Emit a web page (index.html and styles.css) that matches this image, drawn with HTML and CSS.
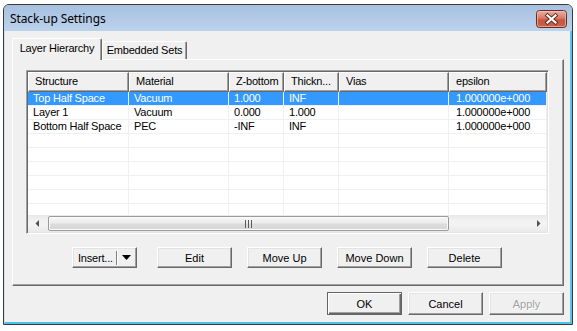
FILE: index.html
```html
<!DOCTYPE html>
<html lang="en">
<head>
  <meta charset="UTF-8"/>
  <title>Stack-up Settings</title>
  <link rel="stylesheet" href="styles.css">
</head>
<body>

<div class="window">
  <div class="titlebar">
    <span class="title">Stack-up Settings</span>
    <span class="close">
      <svg width="31" height="18" viewBox="0 0 31 18">
        <defs>
          <linearGradient id="cg" x1="0" y1="0" x2="0" y2="1">
            <stop offset="0" stop-color="#eab4a6"/>
            <stop offset="0.45" stop-color="#d77a66"/>
            <stop offset="0.55" stop-color="#c9553e"/>
            <stop offset="1" stop-color="#c8624a"/>
          </linearGradient>
        </defs>
        <rect x="0.5" y="0.5" width="30" height="17" rx="3" fill="url(#cg)" stroke="#6b2c22"/>
        <rect x="1.5" y="1.5" width="28" height="15" rx="2" fill="none" stroke="#f4c9bd" stroke-opacity="0.6"/>
        <path d="M11.5 5.5 L19.5 12.5 M19.5 5.5 L11.5 12.5" stroke="#5a2a24" stroke-width="4" stroke-linecap="square"/>
        <path d="M11.5 5.5 L19.5 12.5 M19.5 5.5 L11.5 12.5" stroke="#fff" stroke-width="2.2" stroke-linecap="square"/>
      </svg>
    </span>
  </div>

  <div class="client">
    <div class="tabs">
      <div class="tab active">Layer Hierarchy</div>
      <div class="tab">Embedded Sets</div>
    </div>

    <div class="panel">
      <div class="listview">
        <div class="lv-head">
          <div class="th">Structure</div>
          <div class="th">Material</div>
          <div class="th">Z-bottom</div>
          <div class="th">Thickn...</div>
          <div class="th">Vias</div>
          <div class="th">epsilon</div>
        </div>
        <div class="lv-body">
          <div class="row sel">
            <div class="cell">Top Half Space</div><div class="cell">Vacuum</div><div class="cell">1.000</div><div class="cell">INF</div><div class="cell"></div><div class="cell wide">1.000000e+000</div>
          </div>
          <div class="row">
            <div class="cell">Layer 1</div><div class="cell">Vacuum</div><div class="cell">0.000</div><div class="cell">1.000</div><div class="cell"></div><div class="cell wide">1.000000e+000</div>
          </div>
          <div class="row">
            <div class="cell">Bottom Half Space</div><div class="cell">PEC</div><div class="cell">-INF</div><div class="cell">INF</div><div class="cell"></div><div class="cell wide">1.000000e+000</div>
          </div>
          <div class="row"><div class="cell"></div><div class="cell"></div><div class="cell"></div><div class="cell"></div><div class="cell"></div><div class="cell"></div></div>
          <div class="row"><div class="cell"></div><div class="cell"></div><div class="cell"></div><div class="cell"></div><div class="cell"></div><div class="cell"></div></div>
          <div class="row"><div class="cell"></div><div class="cell"></div><div class="cell"></div><div class="cell"></div><div class="cell"></div><div class="cell"></div></div>
          <div class="row"><div class="cell"></div><div class="cell"></div><div class="cell"></div><div class="cell"></div><div class="cell"></div><div class="cell"></div></div>
          <div class="row"><div class="cell"></div><div class="cell"></div><div class="cell"></div><div class="cell"></div><div class="cell"></div><div class="cell"></div></div>
          <div class="row"><div class="cell"></div><div class="cell"></div><div class="cell"></div><div class="cell"></div><div class="cell"></div><div class="cell"></div></div>
        </div>
        <div class="hscroll">
          <div class="arrow">
            <svg width="4" height="7" viewBox="0 0 4 7"><path d="M4 0 L4 7 L0.5 3.5 Z" fill="#505050"/></svg>
          </div>
          <div class="track">
            <div class="thumb">
              <svg width="7" height="8" viewBox="0 0 7 8">
                <path d="M0.5 0 V8 M3.5 0 V8 M6.5 0 V8" stroke="#5a5a5a" stroke-width="1"/>
              </svg>
            </div>
          </div>
          <div class="arrow">
            <svg width="4" height="7" viewBox="0 0 4 7"><path d="M0 0 L0 7 L3.5 3.5 Z" fill="#505050"/></svg>
          </div>
        </div>
      </div>

      <div class="actions">
        <div class="btn split">
          <span class="label">Insert...</span>
          <span class="divider"></span>
          <svg width="9" height="5" viewBox="0 0 9 5"><path d="M0 0 H9 L4.5 5 Z" fill="#000"/></svg>
        </div>
        <button class="btn edit">Edit</button>
        <button class="btn">Move Up</button>
        <button class="btn">Move Down</button>
        <button class="btn">Delete</button>
      </div>
    </div>

    <div class="dialog-buttons">
      <button class="btn big default">OK</button>
      <button class="btn big">Cancel</button>
      <button class="btn big disabled">Apply</button>
    </div>
  </div>
</div>

</body>
</html>
```

FILE: styles.css
```css
body {
  margin: 0;
  background: #fff;
  font: 11px "Liberation Sans", Arial, sans-serif;
  letter-spacing: -0.2px;
  color: #000;
}
.window {
  box-sizing: border-box;
  width: 570px; height: 321px;
  margin: 4px 0 0 3px;
  border: 1px solid #3a3a3a;
  border-radius: 6px 6px 0 0;
  overflow: hidden;
  display: flex; flex-direction: column;
  background: #c3d7ee;
}
.titlebar {
  height: 26px; flex: none;
  display: flex; align-items: flex-start; justify-content: space-between;
  padding: 0 5px 0 6px;
  background: linear-gradient(#a6c0de, #bcd3ed);
}
.title {
  font: 12px "Noto Sans", "Open Sans", sans-serif;
  letter-spacing: -0.1px;
  line-height: 27px;
}
.close { margin-top: 5px; height: 18px; }
.close svg { display: block; }

.client {
  flex: 1;
  background: #f0f0f0;
  border-left: 1px solid #cfe1f4;
  border-right: 2px solid #5cc3ea;
  border-bottom: 2px solid #4fc0e9;
  display: flex; flex-direction: column;
}

/* tabs */
.tabs {
  display: flex; align-items: flex-end;
  height: 21px;
  margin: 7px 0 0 7px;
}
.tab {
  box-sizing: border-box;
  height: 18px; width: 85px;
  border: 1px solid #fff; border-right-color: #696969; border-bottom: none;
  box-shadow: inset -1px 0 #a0a0a0;
  border-radius: 2px 2px 0 0;
  background: #f0f0f0;
  text-align: center; line-height: 17px;
  white-space: nowrap;
}
.tab.active {
  position: relative; z-index: 1;
  width: 90px; height: 22px;
  margin-bottom: -1px;
  line-height: 19px;
}

.panel {
  box-sizing: border-box;
  height: 227px;
  margin: 0 6px 0 7px;
  border: 1px solid #fff;
  border-right-color: #696969; border-bottom-color: #696969;
  box-shadow: inset -1px -1px #a0a0a0;
  padding: 10px 0 0 13px;
}

/* list view */
.listview {
  box-sizing: border-box;
  width: 523px; height: 164px;
  border: 1px solid #a0a0a0;
  border-right-color: #fff; border-bottom-color: #fff;
  box-shadow: inset 1px 1px #696969, inset -1px -1px #e3e3e3;
  padding: 1px;
  background: #fff;
  display: flex; flex-direction: column;
}
.lv-head, .row {
  display: grid;
  grid-template-columns: 101px 100px 55px 55px 110px 98px;
}
.lv-head { height: 20px; flex: none; }
.th {
  box-sizing: border-box;
  border: 1px solid #fff;
  border-right-color: #696969; border-bottom-color: #696969;
  box-shadow: inset -1px -1px #a0a0a0;
  background: #f0f0f0;
  padding-left: 6px;
  line-height: 17px;
  white-space: nowrap; overflow: hidden;
}
.lv-body { height: 123px; flex: none; overflow: hidden; }
.row { height: 14px; }
.cell {
  box-sizing: border-box;
  border-right: 1px solid #f0f0f0; border-bottom: 1px solid #f0f0f0;
  padding-left: 5px;
  line-height: 13px;
  white-space: nowrap; overflow: hidden;
}
.cell.wide { padding-left: 7px; }
.row.sel { background: #3399ff; color: #fff; }

.hscroll {
  height: 17px; flex: none;
  display: flex;
  background: linear-gradient(#e9e9e9, #f3f3f3 40%, #f3f3f3 60%, #e9e9e9);
}
.arrow {
  width: 17px; flex: none;
  display: flex; align-items: center; justify-content: center;
}
.track { flex: 1; display: flex; align-items: center; }
.thumb {
  box-sizing: border-box;
  width: 401px; height: 15px;
  margin-left: 3px;
  border: 1px solid #9a9a9a; border-radius: 2px;
  background: linear-gradient(#f7f7f7, #ececec 45%, #dcdcdc 55%, #d5d5d5);
  box-shadow: inset 0 0 0 1px #fbfbfb;
  display: flex; align-items: center; justify-content: center;
}

/* buttons */
.btn {
  box-sizing: border-box;
  width: 75px; height: 21px;
  border: 1px solid #fff;
  border-right-color: #696969; border-bottom-color: #696969;
  box-shadow: inset -1px -1px #a0a0a0, inset 1px 1px #e3e3e3;
  background: #f0f0f0;
  font: inherit; color: #000;
  padding: 0; margin: 0;
}
.actions {
  display: flex; gap: 15px;
  margin: 13px 0 0 46px;
}
.split {
  width: 65px;
  display: flex; align-items: center;
  padding-left: 5px;
}
.split .divider {
  width: 1px; height: 14px;
  background: #808080; border-right: 1px solid #fff;
  margin: 0 4px 0 3px;
}
.edit { margin-left: 5px; }

.dialog-buttons {
  display: flex; justify-content: flex-end; gap: 6px;
  margin: 6px 6px 0 0;
}
.btn.big { height: 23px; }
.btn.default {
  border-color: #646464;
  box-shadow: inset 1px 1px #fff, inset -1px -1px #696969, inset -2px -2px #a0a0a0;
}
.btn.disabled { color: #a0a0a0; text-shadow: 1px 1px #fff; }
```
